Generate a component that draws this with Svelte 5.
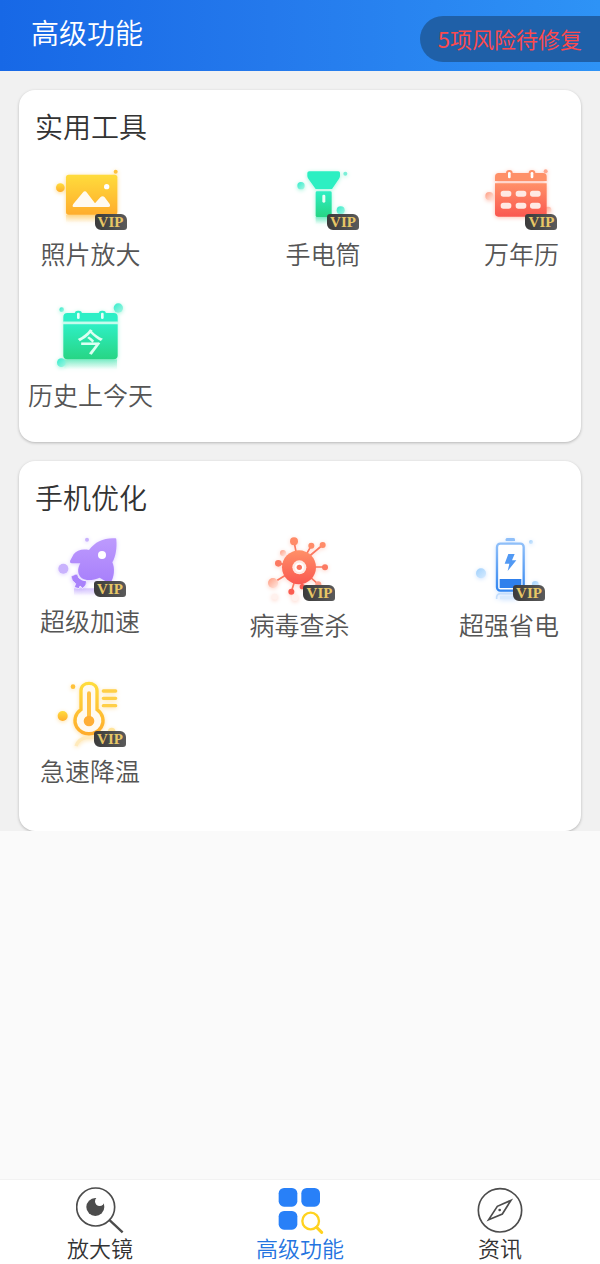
<script lang="ts">
  type Tool = { icon: string; name: string; box: string; height: number; vip: boolean; glow: string };

  const riskCount = 5;

  const groups: { title: string; layout: string; tools: Tool[] }[] = [
    {
      title: '实用工具',
      layout: 'utility',
      tools: [
        { icon: 'photo', name: '照片放大', box: '102 18 216 210', height: 70, vip: true, glow: '#ffd98a' },
        { icon: 'torch', name: '手电筒', box: '82 18 216 210', height: 70, vip: true, glow: '#a5f5dc' },
        { icon: 'calendar', name: '万年历', box: '78 18 216 210', height: 70, vip: true, glow: '#ffc0b0' },
        { icon: 'today', name: '历史上今天', box: '132 36 216 210', height: 70, vip: false, glow: '#a5f5dc' }
      ]
    },
    {
      title: '手机优化',
      layout: 'optimize',
      tools: [
        { icon: 'rocket', name: '超级加速', box: '102 18 216 198', height: 66, vip: true, glow: '#dccfff' },
        { icon: 'virus', name: '病毒查杀', box: '102 18 216 210', height: 70, vip: true, glow: '#ffd2c6' },
        { icon: 'battery', name: '超强省电', box: '69 18 216 210', height: 70, vip: true, glow: '#cfe4ff' },
        { icon: 'thermo', name: '急速降温', box: '162 21 216 210', height: 70, vip: true, glow: '#ffe2a8' }
      ]
    }
  ];

  const tabs = [
    { id: 'magnifier', name: '放大镜' },
    { id: 'advanced', name: '高级功能' },
    { id: 'news', name: '资讯' }
  ];

  let activeTab = $state('advanced');
</script>

<svelte:head>
  <title>高级功能</title>
</svelte:head>

<!-- Shared gradients -->
<svg class="defs" width="0" height="0" aria-hidden="true">
  <defs>
    <linearGradient id="yellow" x1="0" y1="0" x2="0" y2="1">
      <stop offset="0" stop-color="#ffdc3c" /><stop offset="1" stop-color="#ffad2c" />
    </linearGradient>
    <linearGradient id="green" x1="0" y1="0" x2="0" y2="1">
      <stop offset="0" stop-color="#2eefc4" /><stop offset="1" stop-color="#27d584" />
    </linearGradient>
    <linearGradient id="aqua" x1="0" y1="0" x2="1" y2="1">
      <stop offset="0" stop-color="#33eccb" /><stop offset="1" stop-color="#a4f6e2" />
    </linearGradient>
    <linearGradient id="red" x1="0" y1="0" x2="0" y2="1">
      <stop offset="0" stop-color="#ff9068" /><stop offset="1" stop-color="#fa5850" />
    </linearGradient>
    <linearGradient id="pink" x1="0" y1="0" x2="1" y2="1">
      <stop offset="0" stop-color="#ff9c80" /><stop offset="1" stop-color="#ffe9e3" />
    </linearGradient>
    <linearGradient id="purple" x1="0" y1="0" x2="0" y2="1">
      <stop offset="0" stop-color="#bd9afd" /><stop offset="1" stop-color="#a77ffb" />
    </linearGradient>
    <linearGradient id="blue" x1="0" y1="0" x2="0" y2="1">
      <stop offset="0" stop-color="#8fbff9" /><stop offset="1" stop-color="#3286f0" />
    </linearGradient>
    <linearGradient id="sky" x1="0" y1="0" x2="1" y2="1">
      <stop offset="0" stop-color="#9fd0fc" /><stop offset="1" stop-color="#d8ecff" />
    </linearGradient>
    <linearGradient id="fade-yellow" x1="0" y1="0" x2="0" y2="1">
      <stop offset="0" stop-color="#ffc860" stop-opacity="0.5" /><stop offset="1" stop-color="#ffc860" stop-opacity="0" />
    </linearGradient>
    <linearGradient id="fade-green" x1="0" y1="0" x2="0" y2="1">
      <stop offset="0" stop-color="#3ce0a8" stop-opacity="0.5" /><stop offset="1" stop-color="#3ce0a8" stop-opacity="0" />
    </linearGradient>
    <linearGradient id="fade-purple" x1="0" y1="0" x2="0" y2="1">
      <stop offset="0" stop-color="#b394fb" stop-opacity="0.5" /><stop offset="1" stop-color="#b394fb" stop-opacity="0" />
    </linearGradient>
  </defs>
</svg>

{#snippet toolIcon(icon: string)}
  {#if icon === 'photo'}
    <rect x="135" y="182" width="154" height="24" fill="url(#fade-yellow)" />
    <circle cx="118" cy="101" r="13" fill="url(#yellow)" />
    <circle cx="284" cy="53" r="6" fill="#ffc23a" />
    <rect x="135" y="62" width="154" height="120" rx="8" fill="url(#yellow)" />
    <circle cx="257" cy="98" r="8" fill="#fff" />
    <path d="M158 159Q152 158 157 150L185 116Q192 108 198 116L222 148L238 130Q245 123 251 130L266 150Q270 158 262 159Z" fill="#fffaf0" />
  {:else if icon === 'torch'}
    <rect x="168" y="189" width="48" height="22" fill="url(#fade-green)" />
    <circle cx="124" cy="95" r="11" fill="url(#aqua)" />
    <circle cx="257" cy="59" r="6" fill="#7af0d8" />
    <circle cx="243" cy="169" r="12" fill="url(#aqua)" />
    <path d="M149 52H236Q241 52 241 57V66Q241 70 238 74L217 105H168L146 74Q143 70 143 66V57Q143 52 149 52Z" fill="#2cefc2" />
    <rect x="168" y="112" width="48" height="77" rx="4" fill="url(#green)" />
    <rect x="188" y="122" width="9" height="24" rx="4" fill="#e9fff6" />
  {:else if icon === 'calendar'}
    <circle cx="91" cy="126" r="12" fill="url(#pink)" />
    <circle cx="260" cy="52" r="6" fill="#ffa78e" />
    <circle cx="267" cy="168" r="10" fill="url(#pink)" />
    <path d="M108 81V68Q108 57 119 57H252Q263 57 263 68V81Z" fill="#fe9068" />
    <path d="M108 88H263V178Q263 188 253 188H118Q108 188 108 178Z" fill="url(#red)" />
    {#each [151, 219] as x}
      <rect x={x - 10} y="48" width="20" height="30" rx="10" fill="#fe9068" />
      <rect x={x - 4} y="54" width="8" height="19" rx="4" fill="#fff" />
    {/each}
    {#each [119, 155] as y}
      {#each [141, 186, 229] as x}
        <rect x={x - 16} y={y - 9} width="32" height="18" rx="8" fill="#ffe9e4" />
      {/each}
    {/each}
  {:else if icon === 'today'}
    <rect x="160" y="211" width="158" height="30" fill="url(#fade-green)" />
    <circle cx="322" cy="57" r="14" fill="url(#aqua)" />
    <circle cx="152" cy="62" r="7" fill="url(#aqua)" />
    <circle cx="151" cy="221" r="13" fill="url(#aqua)" />
    <path d="M157 98V84Q157 72 169 72H308Q320 72 320 84V98Z" fill="#2cefc6" />
    <rect x="157" y="98" width="163" height="8" fill="#c4fbed" />
    <path d="M157 106H320V199Q320 211 308 211H169Q157 211 157 199Z" fill="url(#green)" />
    {#each [202, 274] as x}
      <rect x={x - 11} y="65" width="22" height="28" rx="10" fill="#2cefc6" />
      <rect x={x - 4} y="71" width="8" height="19" rx="4" fill="#e9fff9" />
    {/each}
    <text class="today-char" x="238" y="188" text-anchor="middle">今</text>
  {:else if icon === 'rocket'}
    <rect x="162" y="190" width="70" height="22" fill="url(#fade-purple)" />
    <circle cx="130" cy="131" r="15" fill="#c9b2fd" />
    <circle cx="201" cy="44" r="6" fill="#c9b2fd" />
    <path d="M286 40C252 38 226 50 207 75C188 71 170 75 161 88L150 108Q149 115 155 115L181 115C172 131 171 148 186 160C200 169 221 165 239 158L270 176C284 158 285 128 277 112C288 93 291 67 289 44Q289 40 286 40Z" fill="url(#purple)" />
    <circle cx="246" cy="90" r="12" fill="#fff" />
    <path d="M153 154L168 147Q175 148 176 158Q184 167 200 168Q201 181 188 190L180 183L177 191L163 187L167 176Q154 168 153 154Z" fill="#a982fb" stroke="#fff" stroke-width="2" />
  {:else if icon === 'virus'}
    <circle cx="132" cy="174" r="15" fill="url(#pink)" />
    <circle cx="162" cy="84" r="9" fill="url(#pink)" />
    <circle cx="137" cy="215" r="9" fill="#fff1ed" />
    <circle cx="198" cy="218" r="10" fill="#fff1ed" />
    <g stroke="#fb7860" stroke-width="5">
      <path d="M210 126L195 49M210 126L247 62M238 96L281 60M210 126L148 115M210 126H288M210 126L145 166M210 126L187 200M210 126L220 190M210 126L268 178" />
    </g>
    <circle cx="195" cy="49" r="12" fill="#ff8b68" />
    <circle cx="247" cy="62" r="9" fill="#ff8b68" />
    <circle cx="281" cy="60" r="9" fill="#ff8b68" />
    <circle cx="148" cy="115" r="10" fill="#fc7a62" />
    <circle cx="288" cy="127" r="9" fill="#fc7a62" />
    <circle cx="187" cy="200" r="9" fill="#fb5c50" />
    <circle cx="220" cy="185" r="8" fill="#fb5c50" />
    <circle cx="268" cy="178" r="9" fill="#fda08c" />
    <circle cx="210" cy="127" r="51" fill="url(#red)" />
    <circle cx="211" cy="127" r="21" fill="#ffe9e3" />
    <circle cx="211" cy="127" r="14" fill="#fff" />
    <circle cx="211" cy="127" r="8" fill="#fb7560" />
  {:else if icon === 'battery'}
    <circle cx="93" cy="145" r="15" fill="url(#sky)" />
    <circle cx="243" cy="51" r="6" fill="url(#sky)" />
    <circle cx="256" cy="178" r="10" fill="url(#sky)" />
    <path d="M140 222Q138 206 152 206H200" fill="none" stroke="#c4defc" stroke-width="5" />
    <path d="M150 218H200" stroke="#d8eafd" stroke-width="10" />
    <path d="M167 48V43Q167 39 172 39H190Q195 39 195 43V48Z" fill="#8fbff9" />
    <rect x="141" y="56" width="80" height="141" rx="10" fill="#fff" stroke="url(#blue)" stroke-width="7" />
    <rect x="149" y="162" width="65" height="27" fill="#2f80ec" />
    <path d="M175 87H194L186 106H199L173 138L178 116H164Z" fill="#5199f4" />
  {:else if icon === 'thermo'}
    <path d="M228 228Q236 206 260 202H286" fill="none" stroke="#ffeabb" stroke-width="10" />
    <circle cx="188" cy="138" r="15" fill="url(#yellow)" />
    <circle cx="219" cy="50" r="7" fill="#ffc23a" />
    <circle cx="335" cy="184" r="11" fill="#ffe49a" />
    <path d="M243 62C243 33 291 33 291 62V119C309 131 314 153 304 171C286 198 248 198 230 171C220 153 225 131 243 119Z" fill="#fffaf0" stroke="url(#yellow)" stroke-width="10" />
    <path d="M267 70V150" stroke="#ffc145" stroke-width="12" stroke-linecap="round" />
    <circle cx="267" cy="153" r="16" fill="#ffae35" />
    <path d="M310 63H347M310 85H347M310 107H347" stroke="#ffcf48" stroke-width="10" stroke-linecap="round" />
  {/if}
{/snippet}

{#snippet tabIcon(id: string)}
  {#if id === 'magnifier'}
    <circle cx="167" cy="126" r="57" fill="none" stroke="#4c4c4c" stroke-width="5" />
    <path d="M207 164L248 202" stroke="#4c4c4c" stroke-width="7" />
    <circle cx="166" cy="126" r="27" fill="#4c4c4c" />
    <circle cx="179" cy="109" r="14" fill="#fff" />
  {:else if id === 'advanced'}
    <rect x="116" y="69" width="56" height="56" rx="16" fill="#2880f8" />
    <rect x="184" y="69" width="56" height="56" rx="16" fill="#2880f8" />
    <rect x="116" y="138" width="56" height="56" rx="16" fill="#2880f8" />
    <circle cx="212" cy="168" r="25" fill="none" stroke="#ffd21f" stroke-width="7" />
    <path d="M230 187L245 202" stroke="#ffd21f" stroke-width="9" stroke-linecap="round" />
  {:else}
    <circle cx="180" cy="136" r="65" fill="none" stroke="#4c4c4c" stroke-width="5" />
    <path d="M213 106L187 147L146 164L172 124Z" fill="none" stroke="#4c4c4c" stroke-width="5" />
    <circle cx="179" cy="135" r="4" fill="#4c4c4c" />
  {/if}
{/snippet}

<div class="page">
  <header class="header">
    <h1>高级功能</h1>
    <button type="button" class="risk">{riskCount}项风险待修复</button>
  </header>

  <main class="content">
    {#each groups as group}
      <section class="card {group.layout}">
        <h2>{group.title}</h2>
        <div class="tools">
          {#each group.tools as tool}
            <button type="button" class="tool">
              <span class="tool-icon">
                <svg viewBox={tool.box} width="72" height={tool.height} style="--glow: {tool.glow}" aria-hidden="true">
                  {@render toolIcon(tool.icon)}
                </svg>
                {#if tool.vip}
                  <span class="vip">VIP</span>
                {/if}
              </span>
              <span class="tool-name">{tool.name}</span>
            </button>
          {/each}
        </div>
      </section>
    {/each}
  </main>

  <nav class="tabbar">
    {#each tabs as tab}
      <a href="#{tab.id}" class="tab" class:active={activeTab === tab.id} onclick={() => (activeTab = tab.id)}>
        <svg viewBox="108 63 144 144" width="48" height="48" aria-hidden="true">
          {@render tabIcon(tab.id)}
        </svg>
        <span>{tab.name}</span>
      </a>
    {/each}
  </nav>
</div>

<style>
  :global(body) {
    margin: 0;
    background: #fafafa;
  }

  .defs {
    position: absolute;
  }

  .page {
    display: flex;
    flex-direction: column;
    min-height: 100vh;
    font-family: 'Noto Sans CJK SC', 'Noto Sans', sans-serif;
    font-weight: 350;
    color: #333;
  }

  button {
    padding: 0;
    border: none;
    background: none;
    font: inherit;
    color: inherit;
    cursor: pointer;
  }

  .header {
    display: flex;
    justify-content: space-between;
    align-items: flex-start;
    height: 71px;
    background: linear-gradient(90deg, #1768e6, #2479ec 45%, #2e93f6);
  }

  .header h1 {
    margin: 0;
    padding: 12px 0 0 31px;
    font-size: 28px;
    line-height: 40px;
    font-weight: inherit;
    color: #fff;
  }

  .risk {
    margin-top: 16px;
    padding: 0 18px 2px;
    border-radius: 23px 0 0 23px;
    background: #1f60a8;
    font-size: 22px;
    line-height: 44px;
    font-weight: 400;
    color: #fb4a4e;
  }

  .content {
    display: flex;
    flex-direction: column;
    gap: 19px;
    padding: 19px 19px 0;
    background: #f1f1f1;
    overflow: hidden;
  }

  .card {
    border-radius: 16px;
    background: #fff;
    box-shadow: 0 1px 3px rgba(0, 0, 0, 0.25);
  }

  .card h2 {
    margin: 0;
    padding: 16px 16px 14px;
    font-size: 28px;
    line-height: 40px;
    font-weight: inherit;
  }

  .tools {
    display: grid;
    grid-template-columns: repeat(3, auto);
    justify-content: space-between;
    align-items: start;
  }

  .utility .tools {
    gap: 31px 0;
    padding: 0 22px 31px 0;
  }

  .utility .tool:nth-child(3n + 1) {
    padding: 0 9px;
  }

  .optimize .tools {
    gap: 36px 0;
    padding: 0 22px 44px 21px;
  }

  .tool {
    display: flex;
    flex-direction: column;
    align-items: center;
    gap: 6px;
  }

  .tool-icon {
    position: relative;
    display: block;
  }

  .tool-icon svg {
    display: block;
    overflow: visible;
    filter: drop-shadow(0 1px 2px var(--glow));
  }

  .today-char {
    font-size: 80px;
    font-weight: 500;
    fill: #dcfff2;
  }

  .vip {
    position: absolute;
    right: 0;
    bottom: 0;
    width: 32px;
    border-radius: 3px 6px 3px 6px;
    background: linear-gradient(90deg, #3b3b3b, #5a5a5a);
    font-family: 'Liberation Serif', serif;
    font-size: 15px;
    line-height: 16px;
    font-weight: 700;
    text-align: center;
    color: #e8c766;
  }

  .tool-name {
    font-size: 25px;
    line-height: 34px;
    color: #555;
    white-space: nowrap;
  }

  .tabbar {
    display: flex;
    margin-top: auto;
    padding: 6px 0 4px;
    border-top: 1px solid #f2f2f2;
    background: #fff;
  }

  .tab {
    flex: 1;
    display: flex;
    flex-direction: column;
    align-items: center;
    font-size: 22px;
    line-height: 26px;
    text-decoration: none;
    color: #333;
  }

  .tab.active {
    color: #2474e0;
  }
</style>
